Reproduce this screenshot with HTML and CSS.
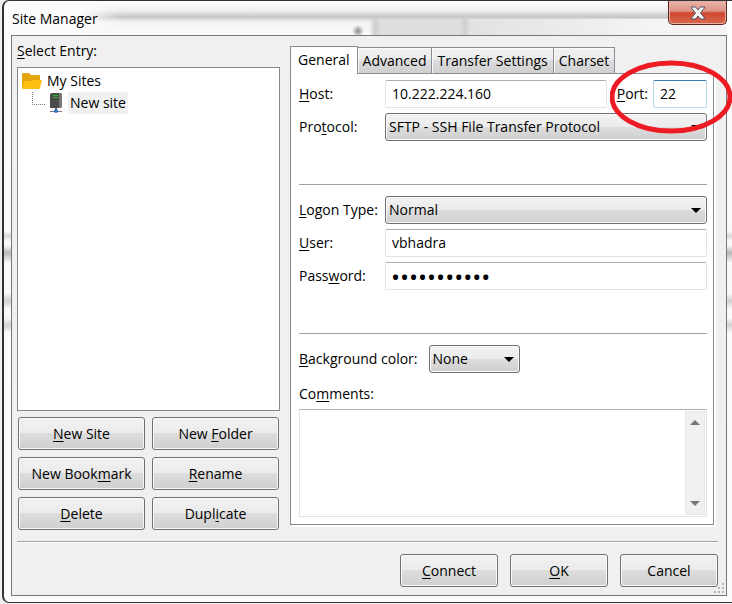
FILE: index.html
```html
<!DOCTYPE html>
<html lang="en">
<head>
    <meta charset="UTF-8">
    <meta name="viewport" content="width=device-width, initial-scale=1.0">
    <title>Site Manager</title>
    <link rel="stylesheet" href="styles.css">
</head>
<body>
    <div class="window">
        <div class="titlebar">
            <h1>Site Manager</h1>
            <button class="close" type="button" aria-label="Close">
                <svg width="16" height="14" viewBox="0 0 16 14">
                    <path d="M1.500 1h4L8 4l2.500-3h4v1L10.500 7l4 5v1h-4L8 10l-2.500 3h-4v-1l4-5-4-5z" fill="#f4f4f4" stroke="#535666" stroke-width="1"/>
                </svg>
            </button>
        </div>

        <form class="client">
            <div class="main">
                <div class="sites">
                    <div class="label" id="entry-label"><u>S</u>elect Entry:</div>
                    <ul class="tree" aria-labelledby="entry-label">
                        <li class="folder">
                            <svg width="22" height="20" viewBox="0 0 22 20">
                                <path d="M1 3q0-1 1-1h6l2 2h8q1 0 1 1v12H1z" fill="#e5a50f"/>
                                <path d="M5 10h5l2-1h9l-2 8q0 1-1 1H2q-1 0-1-1l2-6q0-1 2-1z" fill="#fdbf12"/>
                            </svg>
                            <span>My Sites</span>
                        </li>
                        <li class="site">
                            <svg width="32" height="22" viewBox="0 0 32 22">
                                <path d="M.5 0v12.500H14" fill="none" stroke="#777" stroke-dasharray="1 1"/>
                                <path d="M18 2l2-1h9v15H18z" fill="#4b4b4b"/>
                                <path d="M27 1h2l1 1v13l-1 1h-2z" fill="#777"/>
                                <path d="M21 3.500h5M21 5.500h5" stroke="#27b52b"/>
                                <path d="M24 16v3" stroke="#666" stroke-width="2"/>
                                <path d="M18 19.500h12" stroke="#777"/>
                                <circle cx="24" cy="19" r="2" fill="#3274c4"/>
                            </svg>
                            <span class="selected">New site</span>
                        </li>
                    </ul>
                    <div class="actions">
                        <button type="button"><u>N</u>ew Site</button>
                        <button type="button">New <u>F</u>older</button>
                        <button type="button">New Book<u>m</u>ark</button>
                        <button type="button"><u>R</u>ename</button>
                        <button type="button"><u>D</u>elete</button>
                        <button type="button">Dupl<u>i</u>cate</button>
                    </div>
                </div>

                <div class="notebook">
                    <div class="tabs" role="tablist">
                        <button class="tab active" type="button" role="tab" aria-selected="true">General</button>
                        <button class="tab" type="button" role="tab">Advanced</button>
                        <button class="tab" type="button" role="tab">Transfer Settings</button>
                        <button class="tab" type="button" role="tab">Charset</button>
                    </div>
                    <div class="panel">
                        <div class="fields">
                            <label for="host"><u>H</u>ost:</label>
                            <div class="host-row">
                                <input id="host" type="text" value="10.222.224.160">
                                <div class="port">
                                    <label for="port"><u>P</u>ort:</label>
                                    <input id="port" type="text" value="22">
                                    <svg class="marker" width="124" height="76" viewBox="0 0 124 76">
                                        <ellipse cx="61" cy="38" rx="59" ry="34" fill="none" stroke="#ed1c24" stroke-width="5"/>
                                    </svg>
                                </div>
                            </div>
                            <label for="protocol">Pro<u>t</u>ocol:</label>
                            <select id="protocol"><option>SFTP - SSH File Transfer Protocol</option></select>
                        </div>
                        <hr>
                        <div class="fields">
                            <label for="logon"><u>L</u>ogon Type:</label>
                            <select id="logon"><option>Normal</option></select>
                            <label for="user"><u>U</u>ser:</label>
                            <input id="user" type="text" value="vbhadra">
                            <label for="password">Pass<u>w</u>ord:</label>
                            <input id="password" type="password" value="abcdefghijk">
                        </div>
                        <hr>
                        <div class="color-row">
                            <label for="color"><u>B</u>ackground color:</label>
                            <select id="color"><option>None</option></select>
                        </div>
                        <label class="comments-label" for="comments">Co<u>m</u>ments:</label>
                        <div class="comments">
                            <textarea id="comments"></textarea>
                            <div class="scrollbar">
                                <svg width="10" height="5" viewBox="0 0 10 5"><path d="M0 5l5-5 5 5z" fill="#777"/></svg>
                                <svg width="10" height="5" viewBox="0 0 10 5"><path d="M0 0h10L5 5z" fill="#777"/></svg>
                            </div>
                        </div>
                    </div>
                </div>
            </div>

            <div class="footer">
                <button type="button"><u>C</u>onnect</button>
                <button type="button"><u>O</u>K</button>
                <button type="button">Cancel</button>
            </div>
            <svg class="grip" width="12" height="12" viewBox="0 0 12 12">
                <path d="M8 0h2v2H8zM4 4h2v2H4zM8 4h2v2H8zM0 8h2v2H0zM4 8h2v2H4zM8 8h2v2H8z" fill="#b5b5b5"/>
            </svg>
        </form>
    </div>
</body>
</html>
```
FILE: styles.css
```css
* {
    box-sizing: border-box;
}
body {
    margin: 0;
    padding: 0 0 1px 2px;
    height: 100vh;
    overflow: hidden;
    background-color: #f0f0f0;
    font-family: "Open Sans", "Noto Sans", sans-serif;
    font-size: 14px;
    line-height: 20px;
    color: #000;
}
button, input, select, textarea {
    font: inherit;
    color: inherit;
}
u {
    text-underline-offset: 2px;
}
/* glass frame, the windows behind show through as soft smudges */
.window {
    display: flex;
    flex-direction: column;
    height: 100%;
    padding: 0 5px 6px 7px;
    border: 1px solid #333;
    border-left-width: 2px;
    border-right: none;
    border-radius: 7px 0 0 7px;
    background: linear-gradient(#fdfdfd 0, #fafafa 230px, #d8d8d8 235px, #fafafa 240px, #fafafa 244px, #b8b8b8 252px, #fafafa 262px, #fafafa 292px, #d0d0d0 300px, #fafafa 308px, #fafafa 317px, #d0d0d0 324px, #fcfcfc 332px, #fbfbfb 100%);
}
.titlebar {
    display: flex;
    justify-content: space-between;
    align-items: flex-start;
    height: 34px;
    padding-left: 1px;
    background:
        radial-gradient(circle at 347px 30px, #888 0, transparent 6px),
        linear-gradient(90deg, #fbfbfb 0, #fbfbfb 70px, transparent 110px),
        linear-gradient(90deg, transparent 358px, #cfcfcf 364px, #dedede 370px, #dedede 448px, #d0d0d0 454px, #e2e2e2 460px, #f4f4f4 640px) 0 18px no-repeat,
        linear-gradient(#fdfdfd 0, #f0f0f0 9px, #c6c6c6 16px, #f3f3f3 21px, #fafafa 34px);
}
h1 {
    margin: 8px 0 0 0;
    font-size: 14px;
    font-weight: normal;
    line-height: 20px;
}
.close {
    display: flex;
    justify-content: center;
    align-items: center;
    width: 59px;
    height: 24px;
    padding: 0;
    border: 1px solid #5b2420;
    border-top: none;
    border-radius: 0 0 5px 5px;
    background: linear-gradient(#eab5aa 0, #dc9284 10px, #cf4730 12px, #d8694c 100%);
    box-shadow: inset 0 0 0 1px #e8b0a5;
}
.client {
    position: relative;
    display: flex;
    flex: 1;
    flex-direction: column;
    padding: 5px 8px 8px 5px;
    border: 1px solid #777;
    background-color: #f0f0f0;
}
.main {
    display: flex;
    flex: 1;
    gap: 10px;
    padding-bottom: 11px;
    border-bottom: 1px solid #a0a0a0;
    box-shadow: 0 1px #fff;
}
.sites {
    display: flex;
    flex-direction: column;
    flex: 0 0 263px;
}
.label {
    margin-bottom: 6px;
}
.tree {
    flex: 1;
    margin: 0;
    padding: 2px 3px;
    border: 1px solid #828790;
    background-color: #fff;
    list-style: none;
}
.tree li {
    display: flex;
    align-items: center;
    height: 22px;
}
.folder {
    gap: 4px;
}
.site {
    padding-left: 11px;
    gap: 4px;
}
.selected {
    padding: 1px 2px;
    background-color: #f0f0f0;
}
.actions {
    display: grid;
    grid-template-columns: 1fr 1fr;
    gap: 7px;
    padding: 6px 1px 0;
}
.actions button, .footer button {
    height: 33px;
    padding: 0;
    border: 1px solid #707070;
    border-radius: 3px;
    background: linear-gradient(#f2f2f2 0, #ebebeb 49%, #dddddd 50%, #cfcfcf 100%);
    box-shadow: inset 0 0 0 1px #fafafa;
}
.notebook {
    display: flex;
    flex: 1;
    flex-direction: column;
    padding: 5px 4px 5px 0;
}
.tabs {
    display: flex;
    align-items: flex-end;
    height: 28px;
}
.tab {
    height: 26px;
    margin-bottom: 1px;
    padding: 0 5px;
    border: 1px solid #898c95;
    border-left: none;
    border-bottom: none;
    background: linear-gradient(#f2f2f2 0, #ebebeb 49%, #dddddd 50%, #cfcfcf 100%);
    box-shadow: inset 1px 1px #fafafa;
}
.tab.active {
    height: 28px;
    margin-bottom: 0;
    padding: 0 7px 2px;
    border-left: 1px solid #898c95;
    background: #fff;
    z-index: 1;
}
.panel {
    display: flex;
    flex: 1;
    flex-direction: column;
    margin-top: -1px;
    padding: 6px 6px 7px 8px;
    border: 1px solid #898c95;
    background-color: #fff;
    box-shadow: 2px 2px #fff;
}
.fields {
    display: grid;
    grid-template-columns: 81px 1fr;
    align-items: center;
    row-gap: 5px;
    column-gap: 5px;
}
.host-row {
    display: flex;
    gap: 10px;
}
.port {
    position: relative;
    display: flex;
    align-items: center;
    gap: 5px;
}
/* red circle around the port number */
.marker {
    position: absolute;
    top: -21px;
    left: -7px;
    pointer-events: none;
}
input, select {
    width: 100%;
    min-width: 0;
    height: 28px;
}
input {
    padding: 0 6px 2px;
    border: 1px solid #e2e3ea;
    border-top-color: #abadb3;
    border-radius: 2px;
    background-color: #fff;
    outline: none;
}
#port {
    width: 54px;
    border-color: #b7d9ed;
    border-top-color: #3d7bad;
}
#password {
    padding: 0 5px;
    font-size: 24px;
}
select {
    padding: 0 3px;
    border: 1px solid #707070;
    border-radius: 3px;
    appearance: none;
    background:
        url("data:image/svg+xml,%3Csvg xmlns='http://www.w3.org/2000/svg' width='10' height='5'%3E%3Cpath d='M0 0h10L5 5z'/%3E%3C/svg%3E") right 5px center no-repeat,
        linear-gradient(#f2f2f2 0, #ebebeb 49%, #dddddd 50%, #cfcfcf 100%);
    box-shadow: inset 0 0 0 1px #fafafa;
}
hr {
    width: 100%;
    margin: 43px 0 11px;
    border: none;
    border-top: 1px solid #a0a0a0;
}
.color-row {
    display: flex;
    align-items: center;
    gap: 11px;
}
.color-row select {
    width: 91px;
}
.comments-label {
    margin: 11px 0 5px;
}
.comments {
    display: flex;
    flex: 1;
    padding: 1px;
    border: 1px solid #e2e3ea;
    border-top-color: #abadb3;
}
textarea {
    flex: 1;
    height: 100%;
    padding: 4px;
    border: none;
    outline: none;
    resize: none;
    overflow: hidden;
}
.scrollbar {
    display: flex;
    flex-direction: column;
    justify-content: space-between;
    align-items: center;
    width: 20px;
    padding: 8px 0;
    border: 1px solid #e7e7e7;
    background-color: #f0f0f0;
}
.footer {
    display: flex;
    justify-content: flex-end;
    gap: 12px;
    padding-top: 12px;
}
.footer button {
    width: 98px;
}
.grip {
    position: absolute;
    right: 0;
    bottom: 0;
}
```
